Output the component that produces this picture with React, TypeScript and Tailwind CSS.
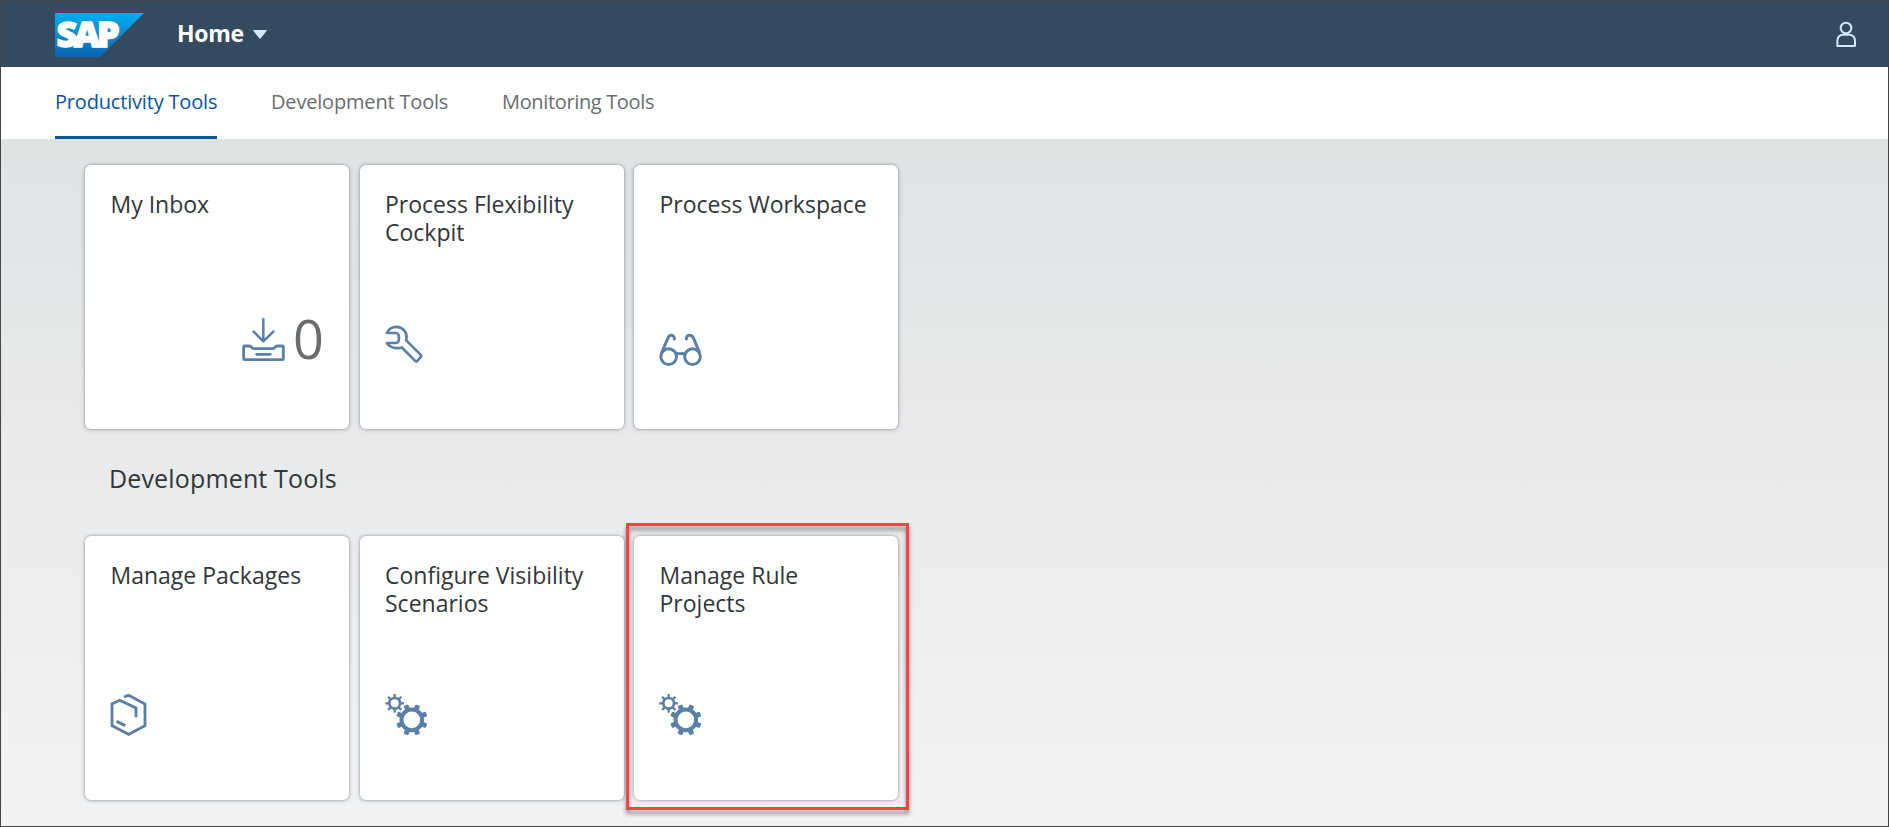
import type { ReactNode } from "react";

const BLUE = "#5a80a8";

function Glyph({ viewBox, children }: { viewBox: string; children: ReactNode }) {
  return (
    <svg
      width="44"
      height="44"
      viewBox={viewBox}
      className="block shrink-0 overflow-visible"
      fill="none"
      stroke={BLUE}
      strokeLinejoin="round"
    >
      {children}
    </svg>
  );
}

function InboxIcon() {
  return (
    <Glyph viewBox="36 66 132 132">
      <path d="M100 58V122M71 95L100 124L130 95" strokeWidth="7.5" strokeLinecap="round" />
      <path
        d="M44 138H59C65 138 64 146 72 146H128C136 146 135 138 141 138H157Q160 138 160 141V176Q160 179 157 179H44Q41 179 41 176V141Q41 138 44 138Z"
        strokeWidth="8.5"
      />
      <path d="M80 163H121" strokeWidth="8" strokeLinecap="round" />
    </Glyph>
  );
}

function WrenchIcon() {
  return (
    <Glyph viewBox="43.5 36 132 132">
      <path
        d="M49 69C55 56 66 50 80 50.5C97 52 110 66 108 84L107 91L150 134Q154 138 150 142L141 152Q137 157 133 152L94 112.5C88 114.5 80 115 73 114C60 111 53 107 49 99H75Q81 99 84 94Q87 84 84 74Q81 69 75 69Z"
        strokeWidth="8"
      />
    </Glyph>
  );
}

function GlassesIcon() {
  return (
    <Glyph viewBox="57 36 132 132">
      <g strokeWidth="9">
        <circle cx="86" cy="140" r="23.5" />
        <circle cx="157.5" cy="140" r="23.5" />
        <path d="M109 131H135" />
        <path d="M66 126L83 86C88 72 104 73 103 87" strokeLinecap="round" />
        <path d="M178 126L161 86C156 72 138 73 139 87" strokeLinecap="round" />
      </g>
    </Glyph>
  );
}

function PackageIcon() {
  return (
    <Glyph viewBox="90 69 132 132">
      <path
        d="M132 81L146 76L195 102V167L146 193L96 167V102L119 91L168 114V142"
        strokeWidth="8.5"
        strokeLinejoin="miter"
      />
      <path d="M110 154L136 167" strokeWidth="9" />
    </Glyph>
  );
}

const TEETH = [0, 45, 90, 135, 180, 225, 270, 315];

function GearsIcon() {
  return (
    <Glyph viewBox="43.5 39 132 132">
      <circle cx="72.5" cy="70" r="16" strokeWidth="8" />
      <circle cx="124" cy="119.5" r="31" strokeWidth="12" />
      <g fill={BLUE} stroke="none">
        {TEETH.map((a) => (
          <rect key={a} x="69" y="42" width="7" height="11" transform={`rotate(${a} 72.5 70)`} />
        ))}
        {TEETH.map((a) => (
          <rect
            key={a}
            x="116.5"
            y="72"
            width="15"
            height="15"
            rx="3"
            transform={`rotate(${a + 22.5} 124 119.5)`}
          />
        ))}
      </g>
    </Glyph>
  );
}

function SapLogo() {
  return (
    <svg width="89" height="44" viewBox="0 0 89 44" className="block overflow-visible">
      <defs>
        <linearGradient id="sap" x1="0" y1="0" x2="0" y2="1">
          <stop offset="0" stopColor="#00aeef" />
          <stop offset="0.5" stopColor="#0f88cf" />
          <stop offset="1" stopColor="#0a66b4" />
        </linearGradient>
      </defs>
      <path d="M0 0H89L45 44H0Z" fill="url(#sap)" />
      <text
        x="1.5"
        y="33.7"
        textLength="60"
        lengthAdjust="spacingAndGlyphs"
        fill="#fff"
        stroke="#fff"
        strokeWidth="1.4"
        fontSize="34.5"
        fontWeight="900"
        fontFamily="'Open Sans', sans-serif"
        letterSpacing="-3"
      >
        SAP
      </text>
    </svg>
  );
}

function Tile({ title, children, highlighted }: { title: string; children: ReactNode; highlighted?: boolean }) {
  return (
    <div className="relative">
      <div className="flex h-[264px] w-[264px] flex-col rounded-[6px] bg-white px-[25px] pt-[25px] shadow-[0_0_2px_1px_rgba(60,70,80,0.25),0_1px_6px_rgba(0,0,0,0.12)]">
        <h3 className="h-[132px] w-[214px] pl-[0.5px] text-[23px] leading-[28px] text-[#32363a]">{title}</h3>
        {children}
      </div>
      {highlighted && (
        <div className="absolute -top-[13px] -left-[8px] h-[287px] w-[283px] border-[3px] border-[#ff4040] drop-shadow-[0_4px_2px_rgba(0,0,0,0.45)]" />
      )}
    </div>
  );
}

export default function App() {
  return (
    <div className="flex h-[827px] w-[1889px] flex-col overflow-hidden border border-[#454545] font-['Open_Sans',sans-serif]">
      <header className="flex h-[66px] shrink-0 items-start bg-[#354a5f] pt-[12px] pl-[54px]">
        <SapLogo />
        <div className="ml-[33px] flex items-center pt-[4px]">
          <span className="w-[74px] text-[23px] leading-[32px] font-bold tracking-[-0.3px] text-white">Home</span>
          <svg width="16" height="10" viewBox="0 0 16 10" className="mt-[4px] ml-[1px]">
            <path d="M1.5 0.5H14.5L8 8.5Z" fill="#d1e8ff" stroke="#d1e8ff" strokeLinejoin="round" />
          </svg>
        </div>
        <svg
          width="22"
          height="28"
          viewBox="138 60 66 84"
          className="mt-[7px] mr-[31px] ml-auto"
          fill="none"
          stroke="#d1e8ff"
          strokeWidth="6"
          strokeLinejoin="round"
        >
          <circle cx="171" cy="84" r="16" />
          <path d="M145 138V124C145 110 151 104 163 104H180C192 104 198 110 198 124V138Z" />
        </svg>
      </header>

      <nav className="flex h-[72px] shrink-0 gap-[54px] bg-white pl-[54px] text-[20px] leading-[28px] tracking-[-0.18px] whitespace-nowrap text-[#6a6d70]">
        <div className="w-[162px] border-b-[3px] border-[#0854a0] pt-[21px] text-[#0854a0]">Productivity Tools</div>
        <div className="w-[177px] pt-[21px]">Development Tools</div>
        <div className="pt-[21px] tracking-[-0.35px]">Monitoring Tools</div>
      </nav>

      <main className="flex grow flex-col bg-linear-to-b from-[#dfe3e4] via-[#eaebed] to-[#f2f3f5] pt-[26px] pl-[84px]">
        <div className="flex gap-[10.5px]">
          <Tile title="My Inbox">
            <div className="flex justify-end gap-[7px]">
              <InboxIcon />
              <span className="-mt-[11px] text-[54px] leading-[54px] text-[#6a6d70]">0</span>
            </div>
          </Tile>
          <Tile title="Process Flexibility Cockpit">
            <WrenchIcon />
          </Tile>
          <Tile title="Process Workspace">
            <GlassesIcon />
          </Tile>
        </div>

        <h2 className="h-[106.5px] pt-[31px] pl-[24px] text-[25px] leading-[36px] tracking-[0.15px] text-[#32363a]">
          Development Tools
        </h2>

        <div className="flex gap-[10.5px]">
          <Tile title="Manage Packages">
            <PackageIcon />
          </Tile>
          <Tile title="Configure Visibility Scenarios">
            <GearsIcon />
          </Tile>
          <Tile title="Manage Rule Projects" highlighted>
            <GearsIcon />
          </Tile>
        </div>
      </main>
    </div>
  );
}
